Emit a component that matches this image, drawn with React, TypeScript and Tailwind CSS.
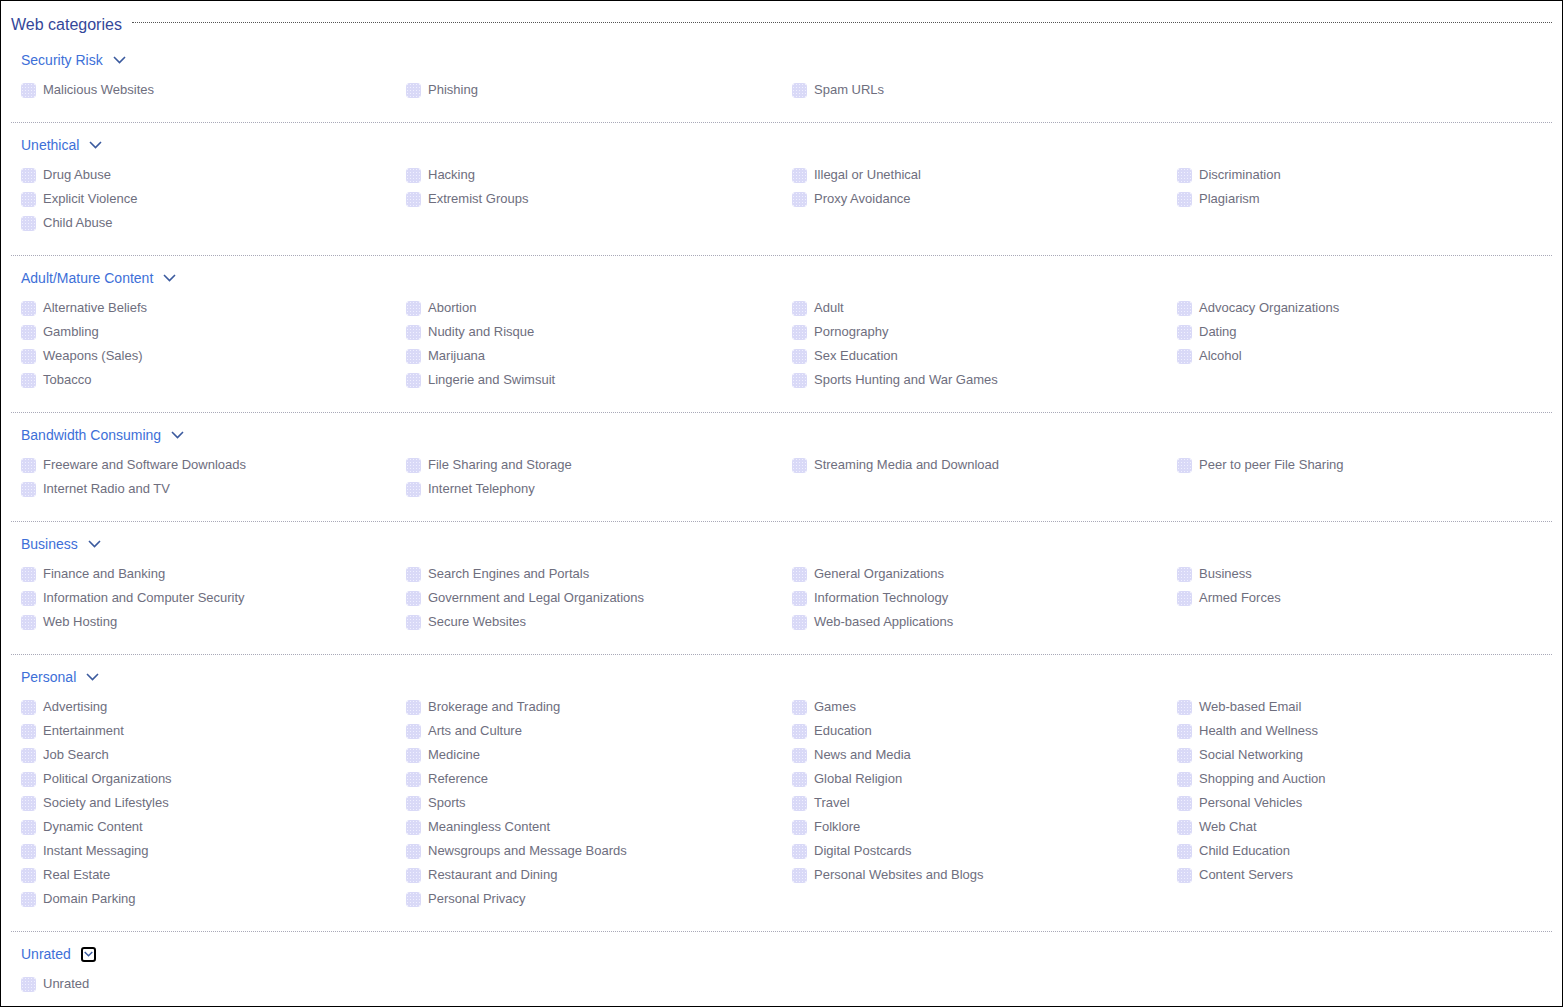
const sections: { title: string; items: string[]; focused?: boolean }[] = [
  { title: "Security Risk", items: ["Malicious Websites", "Phishing", "Spam URLs"] },
  {
    title: "Unethical",
    items: [
      "Drug Abuse", "Hacking", "Illegal or Unethical", "Discrimination",
      "Explicit Violence", "Extremist Groups", "Proxy Avoidance", "Plagiarism",
      "Child Abuse",
    ],
  },
  {
    title: "Adult/Mature Content",
    items: [
      "Alternative Beliefs", "Abortion", "Adult", "Advocacy Organizations",
      "Gambling", "Nudity and Risque", "Pornography", "Dating",
      "Weapons (Sales)", "Marijuana", "Sex Education", "Alcohol",
      "Tobacco", "Lingerie and Swimsuit", "Sports Hunting and War Games",
    ],
  },
  {
    title: "Bandwidth Consuming",
    items: [
      "Freeware and Software Downloads", "File Sharing and Storage", "Streaming Media and Download", "Peer to peer File Sharing",
      "Internet Radio and TV", "Internet Telephony",
    ],
  },
  {
    title: "Business",
    items: [
      "Finance and Banking", "Search Engines and Portals", "General Organizations", "Business",
      "Information and Computer Security", "Government and Legal Organizations", "Information Technology", "Armed Forces",
      "Web Hosting", "Secure Websites", "Web-based Applications",
    ],
  },
  {
    title: "Personal",
    items: [
      "Advertising", "Brokerage and Trading", "Games", "Web-based Email",
      "Entertainment", "Arts and Culture", "Education", "Health and Wellness",
      "Job Search", "Medicine", "News and Media", "Social Networking",
      "Political Organizations", "Reference", "Global Religion", "Shopping and Auction",
      "Society and Lifestyles", "Sports", "Travel", "Personal Vehicles",
      "Dynamic Content", "Meaningless Content", "Folklore", "Web Chat",
      "Instant Messaging", "Newsgroups and Message Boards", "Digital Postcards", "Child Education",
      "Real Estate", "Restaurant and Dining", "Personal Websites and Blogs", "Content Servers",
      "Domain Parking", "Personal Privacy",
    ],
  },
  { title: "Unrated", items: ["Unrated"], focused: true },
];

function Chevron() {
  return (
    <svg width="13" height="8" viewBox="0 0 13 8" fill="none">
      <path d="M1 1l5.5 5.5L12 1" stroke="#3b5a9e" strokeWidth="1.6" />
    </svg>
  );
}

function Checkbox() {
  return (
    <span className="inline-block h-[15px] w-[15px] shrink-0 rounded-[4px] bg-[#d9d9f7] bg-[radial-gradient(#f0f0ff_0.6px,transparent_0.8px)] bg-[length:3px_3px]" />
  );
}

export default function App() {
  return (
    <div className="h-[1007px] w-full overflow-hidden border border-black bg-white font-['Liberation_Sans',Arial,sans-serif]">
      <div className="pl-[10px] pr-[10px] pt-[14px]">
        <div className="flex items-center">
          <span className="text-[16px] leading-5 text-[#34479a]">Web categories</span>
          <span className="ml-[10px] mt-[-5px] flex-1 border-t border-dotted border-[#555]" />
        </div>
        <div className="mt-[15px]">
          {sections.map((s, i) => (
            <div
              key={s.title}
              className={`pl-[10px] ${i === 0 ? "" : "pt-3"} ${i === sections.length - 1 ? "" : "border-b border-dotted border-[#a9a9b8] pb-[20px]"}`}
            >
              <div className="flex h-5 items-center gap-[10px]">
                <span className="text-[14px] leading-5 text-[#3d6fd8]">{s.title}</span>
                {s.focused ? (
                  <span className="flex h-[15px] w-[15px] items-center justify-center rounded-[3px] border-2 border-black">
                    <svg width="9" height="6" viewBox="0 0 13 8" fill="none">
                      <path d="M1 1l5.5 5.5L12 1" stroke="#3b5a9e" strokeWidth="2" />
                    </svg>
                  </span>
                ) : (
                  <Chevron />
                )}
              </div>
              <div className="mt-[8px] grid grid-cols-[385px_386px_385px_1fr]">
                {s.items.map((it) => (
                  <div key={it} className="flex h-6 items-center gap-[7px]">
                    <Checkbox />
                    <span className="text-[13px] text-[#6e6e7e]">{it}</span>
                  </div>
                ))}
              </div>
            </div>
          ))}
        </div>
      </div>
    </div>
  );
}
